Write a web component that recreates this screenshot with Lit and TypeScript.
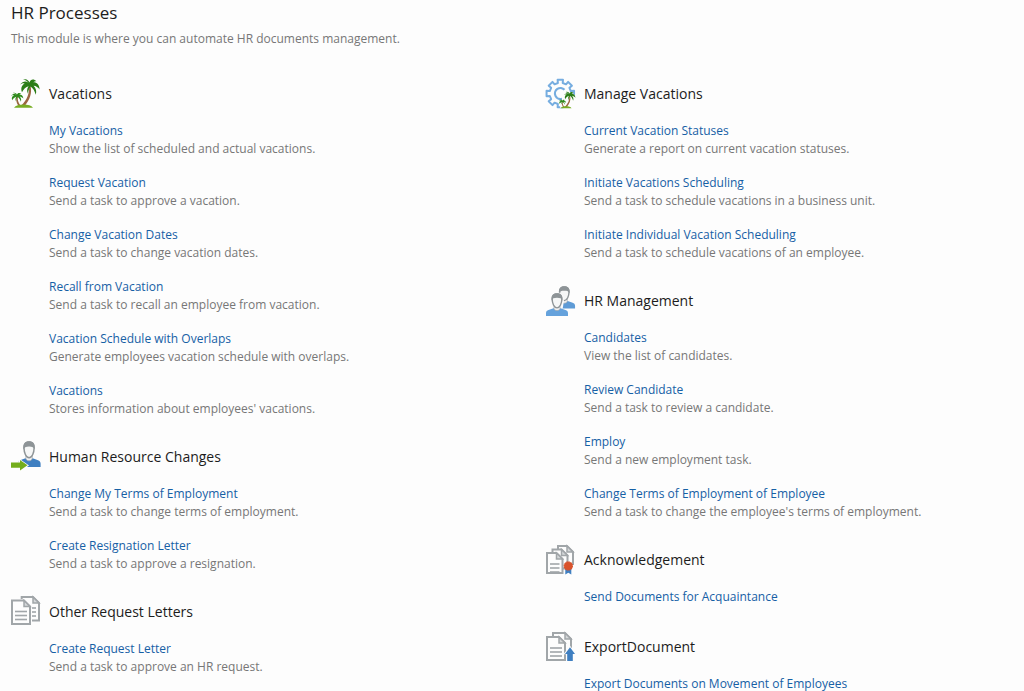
import { LitElement, html, svg, css, SVGTemplateResult } from "lit";
import { customElement, property } from "lit/decorators.js";

interface Entry {
  title: string;
  note?: string;
}
interface Section {
  icon: string;
  title: string;
  entries: Entry[];
}

const GREY = "#a1a6a9";
const BLUE = "#3f7fc1";

/** Closed gear outline with eight rounded teeth around the given centre. */
function gearPath(cx: number, cy: number, outer: number, inner: number): string {
  const points: string[] = [];
  for (let i = 0; i < 8; i++) {
    const base = i * 45 - 90;
    const corners: [number, number][] = [
      [base - 13, inner],
      [base - 11, outer],
      [base + 11, outer],
      [base + 13, inner],
    ];
    for (const [deg, r] of corners) {
      const a = (deg * Math.PI) / 180;
      points.push(`${(cx + r * Math.cos(a)).toFixed(2)} ${(cy + r * Math.sin(a)).toFixed(2)}`);
    }
  }
  return `M${points.join("L")}Z`;
}

/** Sheet of paper with a folded corner and optional text lines. */
const sheet = (x: number, y: number, w: number, h: number, lines: number) => svg`
  <path d="M${x} ${y}h${w - 6}l6 6v${h - 6}h-${w}z" fill="#fdfdfd" stroke=${GREY} stroke-width="2"/>
  <path d="M${x + w - 6} ${y}v6h6z" fill="#d5d8da" stroke=${GREY} stroke-width="1.5"/>
  ${Array.from({ length: lines }, (_, i) => svg`
    <path d="M${x + 3} ${y + 11 + i * 4}h${w - 6}" stroke=${GREY} stroke-width="1.6"/>`)}
`;

const palmCrown = (fill: string) => svg`
  <path fill=${fill} d="M18.500 6.600C17 2.800 12.600 2 9 6.600c2.200-1.400 3.400-1.600 4.600-1.200C10.400 7.400 9.600 10.600 11 14.200c1.400-3 4-5.400 6.600-6C15.800 10.600 15.700 13 17 15.800c.3-3 1.200-5.600 2.600-7.200 2.200 1.600 4.400 4.600 5 8.200 1.400-3.400.4-6.600-2-9 2.400.2 4.600 1.600 6 3.600C28.400 6.400 25 3.800 22 4.400c1-.8 2-1.200 3.400-1.200C22.400.4 19.400 1.600 18.500 4.400 17.400 1.600 14.600.2 12 1.800c2.800 0 5 1.800 6.500 4.800z"/>
`;

const palm = svg`
  <path d="M19.500 8c1.800 7-.8 14-5.500 19.500h-3.600C16 22 18.800 15 18 8z" fill="#9a6540"/>
  <path d="M7 18.500c-.8 3 .2 6 2.400 9H7.200C5.200 24.500 4.800 21.500 5.800 18.500z" fill="#9a6540"/>
  ${palmCrown("#2b7d17")}
  <g transform="translate(-5.700 14) scale(.63 .58)">${palmCrown("#2f8a1b")}</g>
  <path d="M3 29.800c1.600-2.600 5-3.400 9.500-3.400s8 1 9.500 3.400z" fill="#78ad24"/>
`;

/** Head-and-shoulders figure, 22 by 24 units. */
const person = (fill: string) => svg`
  <path d="M0 24v-3c0-1.800 1-2.700 2.500-3.200L7.500 16h7l5 1.800C21 18.300 22 19.200 22 21v3z" fill=${fill}/>
  <path d="M8 13v3.500c.6 1.200 1.600 1.800 3 1.800s2.400-.6 3-1.800V13z" fill="#f1f2f3" stroke="#a9aeb1" stroke-width=".8"/>
  <path d="M6.200 6.500C6.200 2.500 8 1 11 1s4.800 1.500 4.800 5.500-1.800 9-4.800 9-4.800-5-4.800-9z" fill="#f6f7f7" stroke="#8e9497" stroke-width="1.400"/>
  <path d="M5.600 8C5 2.500 7 .3 11 .3S17 2.500 16.400 8C15.800 5.600 14 5 11 5S6.200 5.600 5.600 8z" fill="#8e9497"/>
`;

const ICONS: Record<string, SVGTemplateResult> = {
  palm,
  gear: svg`
    <path d=${gearPath(14.3, 15.5, 14, 10.8)} fill="#fdfdfd" stroke="#76ade0" stroke-width="2" stroke-linejoin="round"/>
    <path d="M18.500 11.800a5.500 5.500 0 1 0-2.500 9" fill="none" stroke="#76ade0" stroke-width="2.200"/>
    <g transform="translate(12.800 13.200) scale(.58 .57)">
      <path d="M2 29c1-11 6-26 17-27 8 1 10 8 10 13l-7 14z" fill="#fdfdfd"/>
      ${palm}
    </g>`,
  people: svg`
    <g transform="translate(7.500 1) scale(.98 .94)">${person("#5e9bd6")}</g>
    <path d="M4.500 16c0-5 2-8.800 6.600-8.800s6.800 3.800 6.800 8.800l-1.200 7.500-5.500 2-5-3z" fill="#fdfdfd"/>
    <g transform="translate(0 8) scale(1 .96)">${person("#65a2dc")}</g>`,
  transfer: svg`
    <g transform="translate(6.500 0) scale(1.050 1.080)">${person(BLUE)}</g>
    <path d="M0 20.300h8V17.500l10 7-10 7v-3H0z" fill="#fdfdfd"/>
    <path d="M0 21.600h9V19l7.500 5.200L9 29.400v-2.600H0z" fill="#74ad1c"/>`,
  letters: svg`
    ${sheet(10.7, 1, 17.3, 23.5, 3)}
    <path d="M0 3h14.500l6.500 6.500V30H0z" fill="#fdfdfd"/>
    ${sheet(1, 4.500, 18, 23.5, 3)}`,
  seal: svg`
    ${sheet(12, 2, 15, 18, 0)}
    ${sheet(6.500, 5.500, 15, 19, 0)}
    ${sheet(1, 9, 15.500, 20, 3)}
    <path d="M19.300 24v6.500l3-1.800 3 1.800V24z" fill=${BLUE}/>
    <circle cx="22.300" cy="22" r="4.100" fill="#d9532c" stroke="#d9532c" stroke-width="1.200" stroke-dasharray="1.600 .5"/>`,
  upload: svg`
    ${sheet(7, 2, 18, 22, 0)}
    ${sheet(1, 6, 18, 23, 3)}
    <path d="M24 14.800l-6.500 8.500h2.500V31h8v-7.700h2.500z" fill="#fdfdfd"/>
    <path d="M24 16.300l-5 6.700h2.200v7h5.600v-7H29z" fill=${BLUE}/>`,
};

const COLUMNS: Section[][] = [
  [
    {
      icon: "palm",
      title: "Vacations",
      entries: [
        { title: "My Vacations", note: "Show the list of scheduled and actual vacations." },
        { title: "Request Vacation", note: "Send a task to approve a vacation." },
        { title: "Change Vacation Dates", note: "Send a task to change vacation dates." },
        { title: "Recall from Vacation", note: "Send a task to recall an employee from vacation." },
        { title: "Vacation Schedule with Overlaps", note: "Generate employees vacation schedule with overlaps." },
        { title: "Vacations", note: "Stores information about employees' vacations." },
      ],
    },
    {
      icon: "transfer",
      title: "Human Resource Changes",
      entries: [
        { title: "Change My Terms of Employment", note: "Send a task to change terms of employment." },
        { title: "Create Resignation Letter", note: "Send a task to approve a resignation." },
      ],
    },
    {
      icon: "letters",
      title: "Other Request Letters",
      entries: [{ title: "Create Request Letter", note: "Send a task to approve an HR request." }],
    },
  ],
  [
    {
      icon: "gear",
      title: "Manage Vacations",
      entries: [
        { title: "Current Vacation Statuses", note: "Generate a report on current vacation statuses." },
        { title: "Initiate Vacations Scheduling", note: "Send a task to schedule vacations in a business unit." },
        { title: "Initiate Individual Vacation Scheduling", note: "Send a task to schedule vacations of an employee." },
      ],
    },
    {
      icon: "people",
      title: "HR Management",
      entries: [
        { title: "Candidates", note: "View the list of candidates." },
        { title: "Review Candidate", note: "Send a task to review a candidate." },
        { title: "Employ", note: "Send a new employment task." },
        { title: "Change Terms of Employment of Employee", note: "Send a task to change the employee's terms of employment." },
      ],
    },
    {
      icon: "seal",
      title: "Acknowledgement",
      entries: [{ title: "Send Documents for Acquaintance" }],
    },
    {
      icon: "upload",
      title: "ExportDocument",
      entries: [{ title: "Export Documents on Movement of Employees" }],
    },
  ],
];

@customElement("process-section")
export class ProcessSection extends LitElement {
  @property({ attribute: false }) section!: Section;

  static styles = css`
    :host {
      display: block;
    }
    .head {
      display: flex;
      align-items: center;
      gap: 8px;
      height: 32px;
    }
    .icon {
      flex: none;
      width: 30px;
      height: 32px;
      overflow: visible;
    }
    .title {
      margin: 0;
      font-size: 14px;
      font-weight: 400;
      line-height: 20px;
      color: #1c1c1c;
    }
    .list {
      list-style: none;
      margin: 12px 0 0;
      padding: 0 0 0 38px;
      display: grid;
      gap: 16px;
    }
    .entry {
      min-height: 20px;
      line-height: 18px;
    }
    .link {
      display: block;
      width: fit-content;
      color: #1660a5;
      text-decoration: none;
    }
    .link:hover {
      text-decoration: underline;
    }
    .note {
      margin: 0;
      color: #777;
    }
  `;

  render() {
    const { icon, title, entries } = this.section;
    return html`
      <section>
        <header class="head">
          <svg class="icon" viewBox="0 0 30 32" aria-hidden="true">${ICONS[icon]}</svg>
          <h2 class="title">${title}</h2>
        </header>
        <ul class="list">
          ${entries.map(
            (e) => html`<li class="entry">
              <a class="link" href="#">${e.title}</a>
              ${e.note ? html`<p class="note">${e.note}</p>` : null}
            </li>`
          )}
        </ul>
      </section>
    `;
  }
}

@customElement("app-root")
export class AppRoot extends LitElement {
  static styles = css`
    :host {
      display: block;
      box-sizing: border-box;
      min-height: 100vh;
      padding: 0 11px;
      background: #fdfdfd;
      font-family: "Open Sans", "Noto Sans", sans-serif;
      font-size: 12px;
    }
    .heading {
      margin: 0;
      font-size: 17px;
      font-weight: 400;
      line-height: 26px;
      color: #1c1c1c;
    }
    .intro {
      margin: 4px 0 30px;
      line-height: 18px;
      color: #777;
    }
    .columns {
      display: grid;
      grid-template-columns: 1fr 1fr;
      column-gap: 68px;
      align-items: start;
    }
    .column {
      display: grid;
      gap: 23px;
    }
  `;

  render() {
    return html`
      <main>
        <h1 class="heading">HR Processes</h1>
        <p class="intro">This module is where you can automate HR documents management.</p>
        <div class="columns">
          ${COLUMNS.map(
            (column) => html`<div class="column">
              ${column.map((s) => html`<process-section .section=${s}></process-section>`)}
            </div>`
          )}
        </div>
      </main>
    `;
  }
}
